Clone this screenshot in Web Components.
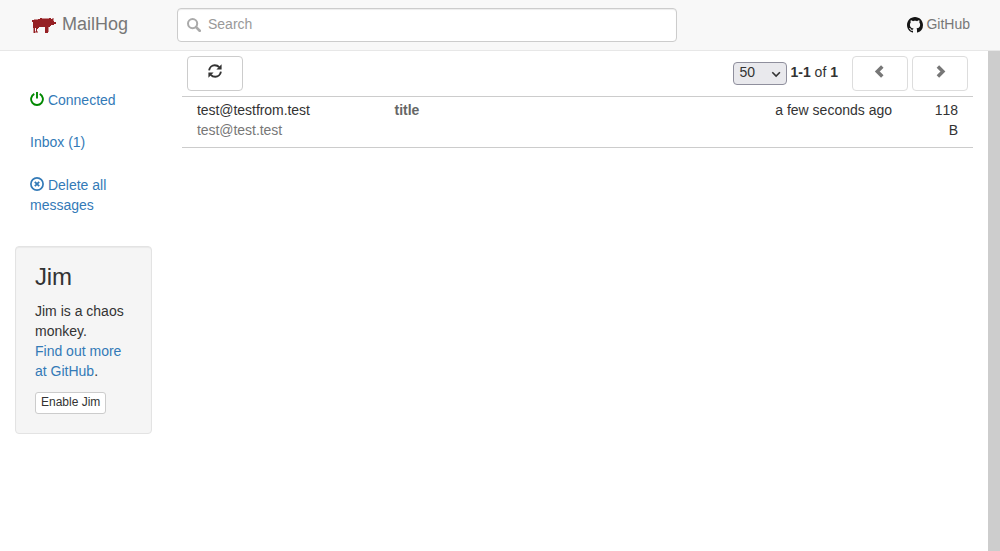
<!DOCTYPE html>
<html lang="en">
<head>
<meta charset="utf-8">
<title>MailHog</title>
<style>
html,body{margin:0;height:100%;overflow:hidden}
body{font:14px/20px "Liberation Sans",Arial,sans-serif;color:#333;background:#fff}
</style>
</head>
<body>
<mail-app></mail-app>
<script>
function define(name, css, html) {
  const t = document.createElement('template');
  t.innerHTML = '<style>*{box-sizing:border-box}a{color:#337ab7;text-decoration:none}svg{display:block}' + css + '</style>' + html;
  customElements.define(name, class extends HTMLElement {
    constructor() {
      super();
      this.attachShadow({ mode: 'open' }).append(t.content.cloneNode(true));
    }
  });
}

const icons = {
  pig: '<svg width="26" height="18" viewBox="0 0 26 18" fill="#962024"><path d="M1 3H3V2.500H7V2H9V1H11V1.500H18V1H20V2H21.500V1H22.500V4H23V5H25V7H23V8H20V9H19V10H17.500V15H17V16H14V10H8V11H7V12H6V14.500H7V15.500H5V11H4V14H4.500V16H2.500V11H2V5H1Z"/></svg>',
  search: '<svg width="14" height="14" viewBox="0 0 14 14" fill="none" stroke="#aaa"><circle cx="5.600" cy="5.600" r="4.600" stroke-width="2"/><path d="M9.100 9.100L12.700 12.700" stroke-width="2.700" stroke-linecap="round"/></svg>',
  github: '<svg width="16" height="16" viewBox="0 0 16 16" fill="#151515"><path d="M8 0C3.580 0 0 3.580 0 8c0 3.540 2.290 6.530 5.470 7.590.4.070.55-.17.55-.38 0-.19-.01-.82-.01-1.490-2.010.37-2.530-.49-2.690-.94-.09-.23-.48-.94-.82-1.130-.28-.15-.68-.52-.01-.53.63-.01 1.080.58 1.230.82.72 1.210 1.870.87 2.330.66.070-.52.280-.87.510-1.070-1.780-.2-3.640-.89-3.640-3.950 0-.87.310-1.590.82-2.150-.08-.2-.36-1.020.080-2.120 0 0 .67-.21 2.200.82.64-.18 1.320-.27 2-.27s1.360.090 2 .27c1.530-1.040 2.200-.82 2.200-.82.44 1.100.16 1.920.080 2.120.51.56.82 1.270.82 2.150 0 3.070-1.870 3.750-3.650 3.950.29.25.54.73.54 1.480 0 1.070-.01 1.930-.01 2.200 0 .21.15.46.55.38A8.010 8.010 0 0 0 16 8c0-4.420-3.580-8-8-8z"/></svg>',
  refresh: '<svg width="14" height="14" viewBox="0 0 14 14" fill="none" stroke="#333" stroke-width="1.900"><path d="M1.100 6.300C1.500 3.300 4 1.200 6.700 1.200C8.500 1.200 10.200 2 11.200 3.200M12.900 7.700C12.500 10.700 10 12.800 7.300 12.800C5.500 12.800 3.800 12 2.800 10.800"/><path d="M13.600.200V5.400H8.400ZM.400 13.800V8.600H5.600Z" fill="#333" stroke="none"/></svg>',
  power: '<svg width="14" height="14" viewBox="0 0 14 14" fill="none" stroke="#080" stroke-width="1.900"><path d="M4.300 1.900A5.900 5.900 0 1 0 9.700 1.900M7 0V6.500"/></svg>',
  remove: '<svg width="14" height="14" viewBox="0 0 14 14" fill="none" stroke="#337ab7"><circle cx="7" cy="7" r="6.100" stroke-width="1.700"/><path d="M4.800 4.800L9.200 9.200M9.200 4.800L4.800 9.200" stroke-width="1.800"/></svg>',
  left: '<svg width="14" height="14" viewBox="0 0 14 14" fill="none" stroke="#777" stroke-width="3.500"><path d="M9.300 1.600L4.300 6.600L9.300 11.600"/></svg>',
  right: '<svg width="14" height="14" viewBox="0 0 14 14" fill="none" stroke="#777" stroke-width="3.500"><path d="M4.900 1.600L9.900 6.600L4.900 11.600"/></svg>'
};
customElements.define('mail-icon', class extends HTMLElement {
  connectedCallback() {
    if (!this.shadowRoot) this.attachShadow({ mode: 'open' }).innerHTML =
      '<style>:host{display:inline-block;vertical-align:-1px}svg{display:block}</style>' + icons[this.getAttribute('name')];
  }
});

define('nav-bar', `
:host{display:flex;height:51px;background:#f8f8f8;border-bottom:1px solid #e7e7e7;box-sizing:border-box;padding:8px 30px 8px 31px;color:#777}
.brand{display:flex;align-items:flex-start;gap:5px;width:146px;font-size:18px;padding-top:6px}
.brand mail-icon{margin-top:3px}
.search{display:flex;align-items:center;gap:7px;width:500px;height:34px;border:1px solid #ccc;border-radius:4px;background:#fff;box-shadow:inset 0 1px 1px rgba(0,0,0,.075);padding:0 9px 2px;color:#999}
.search mail-icon{margin-top:2px}
.gh{display:flex;gap:3px;margin-left:auto;padding-top:6px}
.gh mail-icon{margin-top:3px}`,
`<div class="brand"><mail-icon name="pig"></mail-icon><span>MailHog</span></div>
<div class="search"><mail-icon name="search"></mail-icon><span>Search</span></div>
<div class="gh"><mail-icon name="github"></mail-icon><span>GitHub</span></div>`);

define('side-item', ':host{display:block;padding:0 15px;height:20px;margin-bottom:22px}:host([tall]){height:40px;margin-bottom:0}', '<a><slot></slot></a>');

define('jim-card', `
:host{display:block;box-sizing:border-box;height:188px;background:#f5f5f5;border:1px solid #e3e3e3;border-radius:4px;box-shadow:inset 0 1px 1px rgba(0,0,0,.05);padding:17px 19px;margin-top:31px}
h3{font-size:24px;line-height:26px;font-weight:500;margin:0 0 11px;letter-spacing:-.2px}
p{margin:0 0 11px}
button{display:block;font:12px/18px "Liberation Sans",Arial,sans-serif;height:22px;color:#333;background:#fff;border:1px solid #ccc;border-radius:3px;padding:0 5px 2px}`,
`<h3>Jim</h3><p>Jim is a chaos<br>monkey.<br><a>Find out more<br>at GitHub</a>.</p><button>Enable Jim</button>`);

define('side-bar', ':host{display:block;padding:39px 15px 0}',
`<side-item><mail-icon name="power"></mail-icon> Connected</side-item>
<side-item>Inbox (1)</side-item>
<side-item tall style="margin-top:23px"><mail-icon name="remove"></mail-icon> Delete all<br>messages</side-item>
<jim-card></jim-card>`);

define('icon-button', ':host{display:flex;box-sizing:border-box;width:56px;height:35px;border:1px solid #ccc;border-radius:4px;background:#fff;justify-content:center;padding-top:7px}:host([disabled]){border-color:#ddd;padding-top:8px}', '<slot></slot>');

define('page-size', ':host{display:flex;box-sizing:border-box;width:54px;height:23px;border:1px solid #8f8f9d;border-radius:4px;background:#e9e9ed;padding:0 5px 0 6px;justify-content:space-between;line-height:19px}svg{margin-top:8px}',
'<span><slot></slot></span><svg width="10" height="8" viewBox="0 0 10 8" fill="none" stroke="#333" stroke-width="1.600"><path d="M1.300 1.200L5.100 5L8.900 1.200"/></svg>');

define('tool-bar', `:host{display:flex;box-sizing:border-box;height:45px;padding:5px 5px 0}
page-size{margin:6px 4px 0 auto}.count{padding-top:6px;margin-right:14px}icon-button+icon-button{margin-left:4px}`,
`<icon-button><mail-icon name="refresh"></mail-icon></icon-button>
<page-size>50</page-size><span class="count"><b>1-1</b> of <b>1</b></span>
<icon-button disabled><mail-icon name="left"></mail-icon></icon-button><icon-button disabled><mail-icon name="right"></mail-icon></icon-button>`);

define('message-row', `:host{display:grid;grid-template-columns:197.500px 1fr 200px 66px;box-sizing:border-box;height:52px;border:solid #ccc;border-width:1px 0;padding:3px 15px 0}
.from{letter-spacing:-.05px}.to{color:#777}.subject{font-weight:bold;color:#666}.time,.size{text-align:right}`,
`<div class="from"><slot name="from"></slot><div class="to"><slot name="to"></slot></div></div>
<div class="subject"><slot name="subject"></slot></div>
<div class="time"><slot name="time"></slot></div><div class="size"><slot name="size"></slot></div>`);

define('mail-app', `:host{display:flex;flex-direction:column;height:551px}
main{flex:1;display:grid;grid-template-columns:167px 1fr 12px;min-height:0}
section{padding:0 15px}.track{background:#cdcdcd}`,
`<nav-bar></nav-bar><main><side-bar></side-bar><section><tool-bar></tool-bar>
<message-row><span slot="from">test@testfrom.test</span><span slot="to">test@test.test</span><span slot="subject">title</span><span slot="time">a few seconds ago</span><span slot="size" style="font-kerning:none">118<br>B</span></message-row>
</section><div class="track"></div></main>`);
</script>
</body>
</html>
